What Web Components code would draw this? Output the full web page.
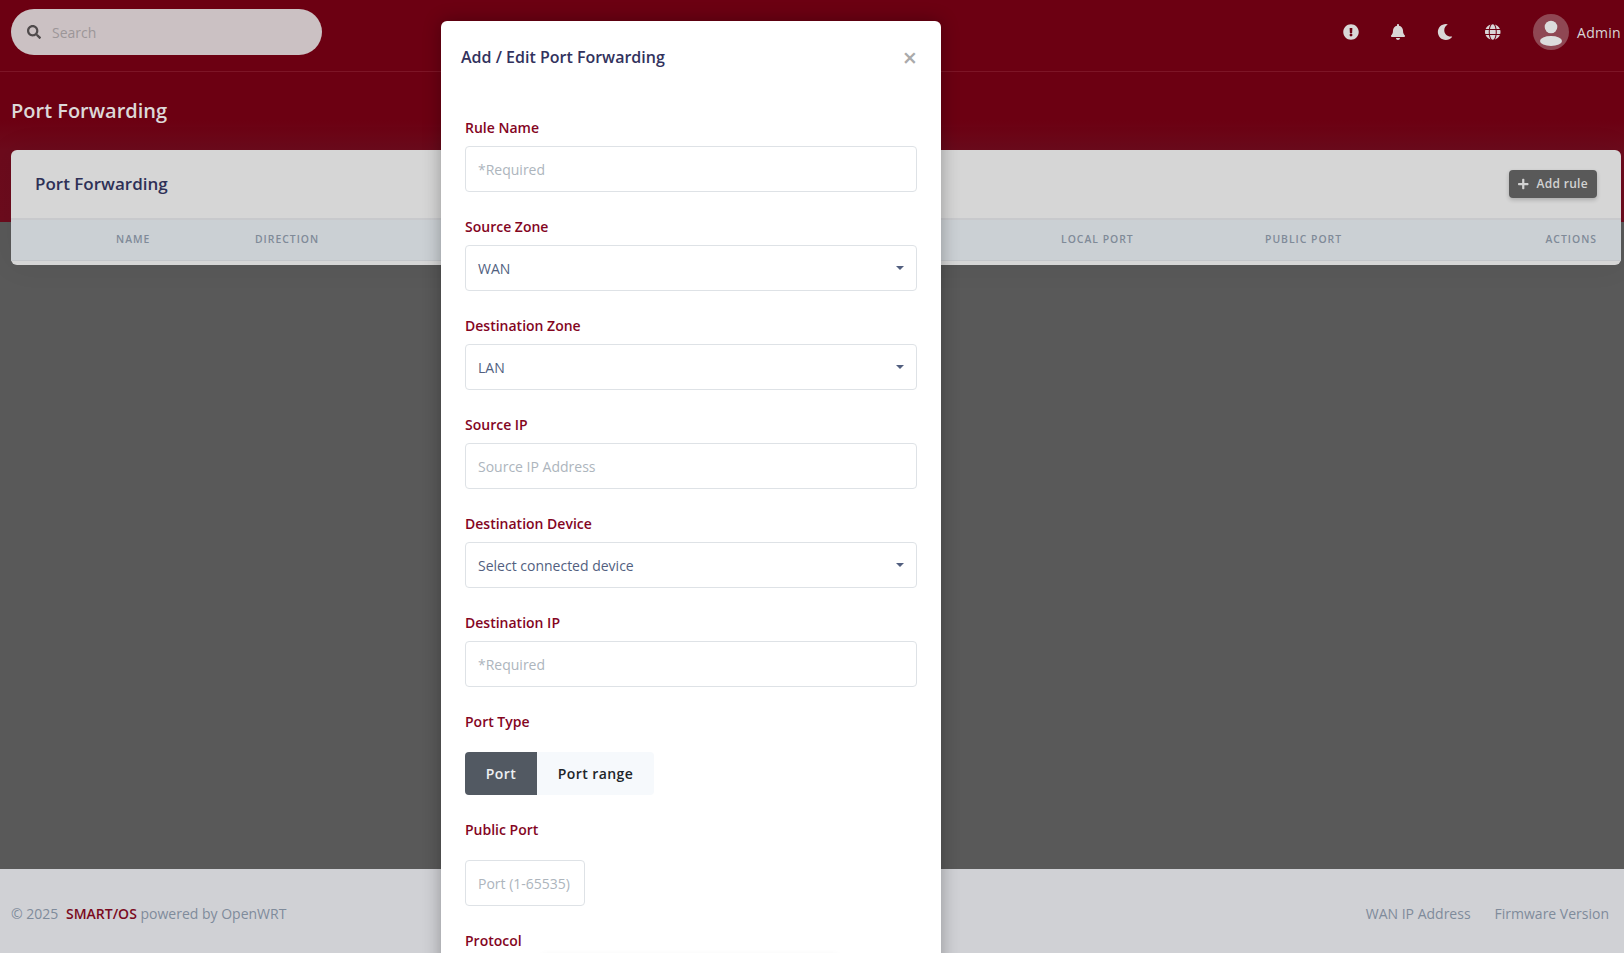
<!DOCTYPE html>
<html lang="en">
<head>
<meta charset="utf-8">
<title>Port Forwarding</title>
<style>
html,body{margin:0;padding:0;height:953px;overflow:hidden}
body{font-family:"Open Sans","Noto Sans",sans-serif;font-size:14px;background:#595959;position:relative;display:flex;flex-direction:column}
</style>
</head>
<body>
<app-hero>
  <app-topbar></app-topbar>
</app-hero>
<pf-card></pf-card>
<app-footer></app-footer>
<pf-modal>
  <form-field label="Rule Name" placeholder="*Required"></form-field>
  <form-field label="Source Zone" value="WAN" select></form-field>
  <form-field label="Destination Zone" value="LAN" select></form-field>
  <form-field label="Source IP" placeholder="Source IP Address"></form-field>
  <form-field label="Destination Device" value="Select connected device" select></form-field>
  <form-field label="Destination IP" placeholder="*Required"></form-field>
  <port-type></port-type>
  <form-field label="Public Port" placeholder="Port (1-65535)" narrow></form-field>
  <form-field label="Protocol" clipped></form-field>
</pf-modal>
<script>
const P={
 alert:['0 0 512 512','M504 256c0 136.997-111.043 248-248 248S8 392.997 8 256C8 119.083 119.043 8 256 8s248 111.083 248 248zm-248 50c-25.405 0-46 20.595-46 46s20.595 46 46 46 46-20.595 46-46-20.595-46-46-46zm-43.673-165.346l7.418 136c.347 6.364 5.609 11.346 11.982 11.346h48.546c6.373 0 11.635-4.982 11.982-11.346l7.418-136c.375-6.874-5.098-12.654-11.982-12.654h-63.383c-6.884 0-12.356 5.78-11.981 12.654z'],
 bell:['0 0 448 512','M224 512c35.32 0 63.97-28.65 63.97-64H160.03c0 35.35 28.65 64 63.97 64zm215.39-149.71c-19.32-20.76-55.47-51.99-55.47-154.29 0-77.7-54.48-139.9-127.94-155.16V32c0-17.67-14.32-32-31.98-32s-31.98 14.33-31.98 32v20.84C118.56 68.1 64.08 130.3 64.08 208c0 102.3-36.15 133.53-55.47 154.29-6 6.45-8.66 14.16-8.61 21.71.11 16.4 12.98 32 32.1 32h383.8c19.12 0 32-15.6 32.1-32 .05-7.55-2.61-15.27-8.61-21.71z'],
 moon:['0 0 512 512','M283.211 512c78.962 0 151.079-35.925 198.857-94.792 7.068-8.708-.639-21.43-11.562-19.35-124.203 23.654-238.262-71.576-238.262-196.954 0-72.222 38.662-138.635 101.498-174.394 9.686-5.512 7.25-20.197-3.756-22.23A258.156 258.156 0 0 0 283.211 0c-141.309 0-256 114.511-256 256 0 141.309 114.511 256 256 256z'],
 globe:['0 0 496 512','M336.5 160C322 70.7 287.8 8 248 8s-74 62.7-88.5 152h177zM152 256c0 22.2 1.2 43.5 3.3 64h185.3c2.1-20.5 3.3-41.8 3.3-64s-1.2-43.5-3.3-64H155.3c-2.1 20.5-3.3 41.8-3.3 64zm324.7-96c-28.6-67.9-86.5-120.4-158-141.6 24.4 33.8 41.2 84.7 50 141.6h108zM177.2 18.4C105.8 39.6 47.8 92.1 19.3 160h108c8.7-56.9 25.5-107.8 49.9-141.6zM487.4 192H372.7c2.1 21 3.3 42.5 3.3 64s-1.2 43-3.3 64h114.6c5.5-20.5 8.6-41.8 8.6-64s-3.1-43.5-8.5-64zM120 256c0-21.5 1.2-43 3.3-64H8.6C3.2 212.5 0 233.8 0 256s3.2 43.5 8.6 64h114.6c-2-21-3.2-42.5-3.2-64zm39.5 96c14.5 89.3 48.7 152 88.5 152s74-62.7 88.5-152h-177zm159.3 141.6c71.4-21.2 129.4-73.7 158-141.6h-108c-8.8 56.9-25.6 107.8-50 141.6zM19.3 352c28.6 67.9 86.5 120.4 158 141.6-24.4-33.8-41.2-84.7-50-141.6h-108z'],
 search:['0 0 512 512','M505 442.7L405.3 343c-4.5-4.5-10.6-7-17-7H372c27.6-35.3 44-79.7 44-128C416 93.1 322.9 0 208 0S0 93.1 0 208s93.1 208 208 208c48.3 0 92.7-16.4 128-44v16.3c0 6.4 2.5 12.5 7 17l99.7 99.7c9.4 9.4 24.6 9.4 33.9 0l28.3-28.3c9.4-9.4 9.4-24.6.1-34zM208 336c-70.7 0-128-57.2-128-128 0-70.7 57.2-128 128-128 70.7 0 128 57.2 128 128 0 70.7-57.2 128-128 128z'],
 plus:['0 0 448 512','M416 208H272V64c0-17.67-14.33-32-32-32h-32c-17.67 0-32 14.33-32 32v144H32c-17.67 0-32 14.33-32 32v32c0 17.67 14.33 32 32 32h144v144c0 17.67 14.33 32 32 32h32c17.67 0 32-14.33 32-32V304h144c17.67 0 32-14.33 32-32v-32c0-17.67-14.33-32-32-32z']
};
const ic=(n,h)=>`<svg viewBox="${P[n][0]}" height="${h}" fill="currentColor" aria-hidden="true"><path d="${P[n][1]}"/></svg>`;
class Base extends HTMLElement{
  constructor(){super();this.attachShadow({mode:'open'})}
  connectedCallback(){this.shadowRoot.innerHTML=this.view()}
}
customElements.define('app-hero',class extends Base{view(){return `<style>
:host{display:block;height:222px;flex:none;background:linear-gradient(#6c0012 0,#6c0012 120px,#6c0b1c 150px,#6c0c1d 222px);color:#d8d6d6}
h1{margin:0;padding:24px 11px 0;font-size:20px;font-weight:600;line-height:30px;color:#dcd8d8}
</style><slot></slot><h1>Port Forwarding</h1>`}});
customElements.define('app-topbar',class extends Base{view(){return `<style>
:host{display:flex;align-items:center;height:72px;box-sizing:border-box;padding:0 3px 7px 11px;border-bottom:1px solid #7d1526}
.s{box-sizing:border-box;width:311px;height:46px;border-radius:23px;background:#cbc1c3;display:flex;align-items:center;padding-left:16px;color:#4f4a4b}
.s span{margin-left:11px;color:#9c9698;font-size:14px}
svg{display:block}
.i{margin-left:auto;display:flex;align-items:center;color:#d9d7d7}
.b{width:16px;display:flex;justify-content:center;margin-right:31px}
.b.m{margin-right:32px}
.b.l{margin-right:33px}
.a{width:36px;height:36px;border-radius:50%;background:#8f4753;margin-left:-1px;overflow:hidden}
.n{margin-left:8px;font-size:14px;letter-spacing:.3px;color:#d9d7d7}
</style><div class="s">${ic('search',14)}<span>Search</span></div>
<div class="i"><span class="b">${ic('alert',16)}</span><span class="b">${ic('bell',16)}</span><span class="b m">${ic('moon',16)}</span><span class="b l">${ic('globe',16)}</span>
<div class="a"><svg viewBox="0 0 36 36" width="36" height="36" fill="#dcdcdc"><circle cx="18" cy="13" r="6.3"/><ellipse cx="18" cy="27" rx="11" ry="5"/></svg></div><span class="n">Admin</span></div>`}});
customElements.define('pf-card',class extends Base{view(){return `<style>
:host{display:block;flex:none;margin:-72px 3px 0 11px;height:115px;background:#d6d6d6;border-radius:6px;overflow:hidden;box-shadow:0 0 2rem 0 rgba(0,0,0,.06)}
.h{display:flex;align-items:center;justify-content:space-between;height:67px;padding:0 24px 1px;border-bottom:2px solid #c8c9cc}
h3{margin:0;font-size:17px;font-weight:600;color:#2e3056}
button{font:600 12px "Open Sans",sans-serif;letter-spacing:.3px;color:#d2d2d2;background:#595959;border:0;border-radius:4px;height:28px;width:88px;display:flex;align-items:center;justify-content:center;gap:8px;padding:0;box-shadow:0 2px 4px rgba(0,0,0,.2)}
.t{display:grid;grid-template-columns:139px 806px 204px 1fr auto;height:38px;align-items:center;background:#cbd0d4;border-bottom:1px solid #c3c6ca;padding:0 24px 2px 105px;font-size:10.4px;font-weight:600;letter-spacing:1px;color:#7f8a98;text-transform:uppercase}
</style><div class="h"><h3>Port Forwarding</h3><button>${ic('plus',12)}<span>Add rule</span></button></div>
<div class="t"><span>Name</span><span>Direction</span><span>Local Port</span><span>Public Port</span><span>Actions</span></div>`}});
customElements.define('app-footer',class extends Base{view(){return `<style>
:host{display:flex;align-items:center;justify-content:space-between;box-sizing:border-box;margin-top:auto;height:84px;flex:none;background:#d0d1d5;padding:5px 15px 0 11px;color:#7f8b9b;font-size:14px}
b{font-weight:600;color:#7a0a20;margin:0 0 0 4px}
nav{display:flex;gap:24px}
</style><div>© 2025 <b>SMART/OS</b> powered by OpenWRT</div><nav><span>WAN IP Address</span><span>Firmware Version</span></nav>`}});
customElements.define('pf-modal',class extends Base{view(){return `<style>
:host{position:absolute;left:441px;top:21px;width:500px;height:980px;box-sizing:border-box;background:#fff;border-radius:6px;box-shadow:0 0 18px rgba(0,0,0,.3)}
.h{display:flex;justify-content:space-between;align-items:center;padding:24px 24px 0 20px;height:24px;color:#32325d;margin-bottom:48px}
h5{margin:0;font-size:16px;font-weight:600;line-height:24px;color:#32325d}
.x{font-size:25px;font-weight:600;color:#aaa;line-height:24px}
.b{padding:0 24px}
</style><div class="h"><h5>Add / Edit Port Forwarding</h5><span class="x">×</span></div><div class="b"><slot></slot></div>`}});
customElements.define('form-field',class extends Base{view(){
 const ph=this.getAttribute('placeholder'),val=this.getAttribute('value'),sel=this.hasAttribute('select'),cl=this.hasAttribute('clipped');
 return `<style>
:host{display:block;margin-bottom:24px}
label{display:block;font-size:14px;font-weight:600;line-height:21px;color:#84061f;margin-bottom:8px}
:host([narrow]) label{margin-bottom:20px}
.c{box-sizing:border-box;height:46px;border:1px solid #dee2e6;border-radius:4px;background:#fff;display:flex;align-items:center;justify-content:space-between;padding:0 12px;font-size:14px;color:#525f7f}
:host([narrow]) .c{width:120px;white-space:nowrap}
.p{color:#adb5bd;line-height:21px;margin-top:1px}
.v{margin-top:1px}
.a{width:0;height:0;border:4px solid transparent;border-top-color:#525f7f;border-bottom:0}
.g{width:300px;height:30px;margin:-4px 0 0 75px;border-radius:6px;box-shadow:0 -1px 6px rgba(0,0,0,.04)}
</style><label>${this.getAttribute('label')}</label>${cl?'<div class="g"></div>':`<div class="c">${ph?`<span class="p">${ph}</span>`:`<span class="v">${val}</span>`}${sel?'<span class="a"></span>':''}</div>`}`}});
customElements.define('port-type',class extends Base{view(){return `<style>
:host{display:block;margin-bottom:24px}
label{display:block;font-size:14px;font-weight:600;line-height:21px;color:#84061f;margin-bottom:20px}
.g{display:flex;height:43px;width:max-content;border-radius:4px;overflow:hidden;font-size:14px;font-weight:600;letter-spacing:.4px}
span{display:flex;align-items:center;justify-content:center}
.on{width:72px;background:#525962;color:#eef0f2}
.off{width:117px;background:#f6f9fc;color:#212529}
</style><label>Port Type</label><div class="g"><span class="on">Port</span><span class="off">Port range</span></div>`}});
</script>
</body>
</html>
